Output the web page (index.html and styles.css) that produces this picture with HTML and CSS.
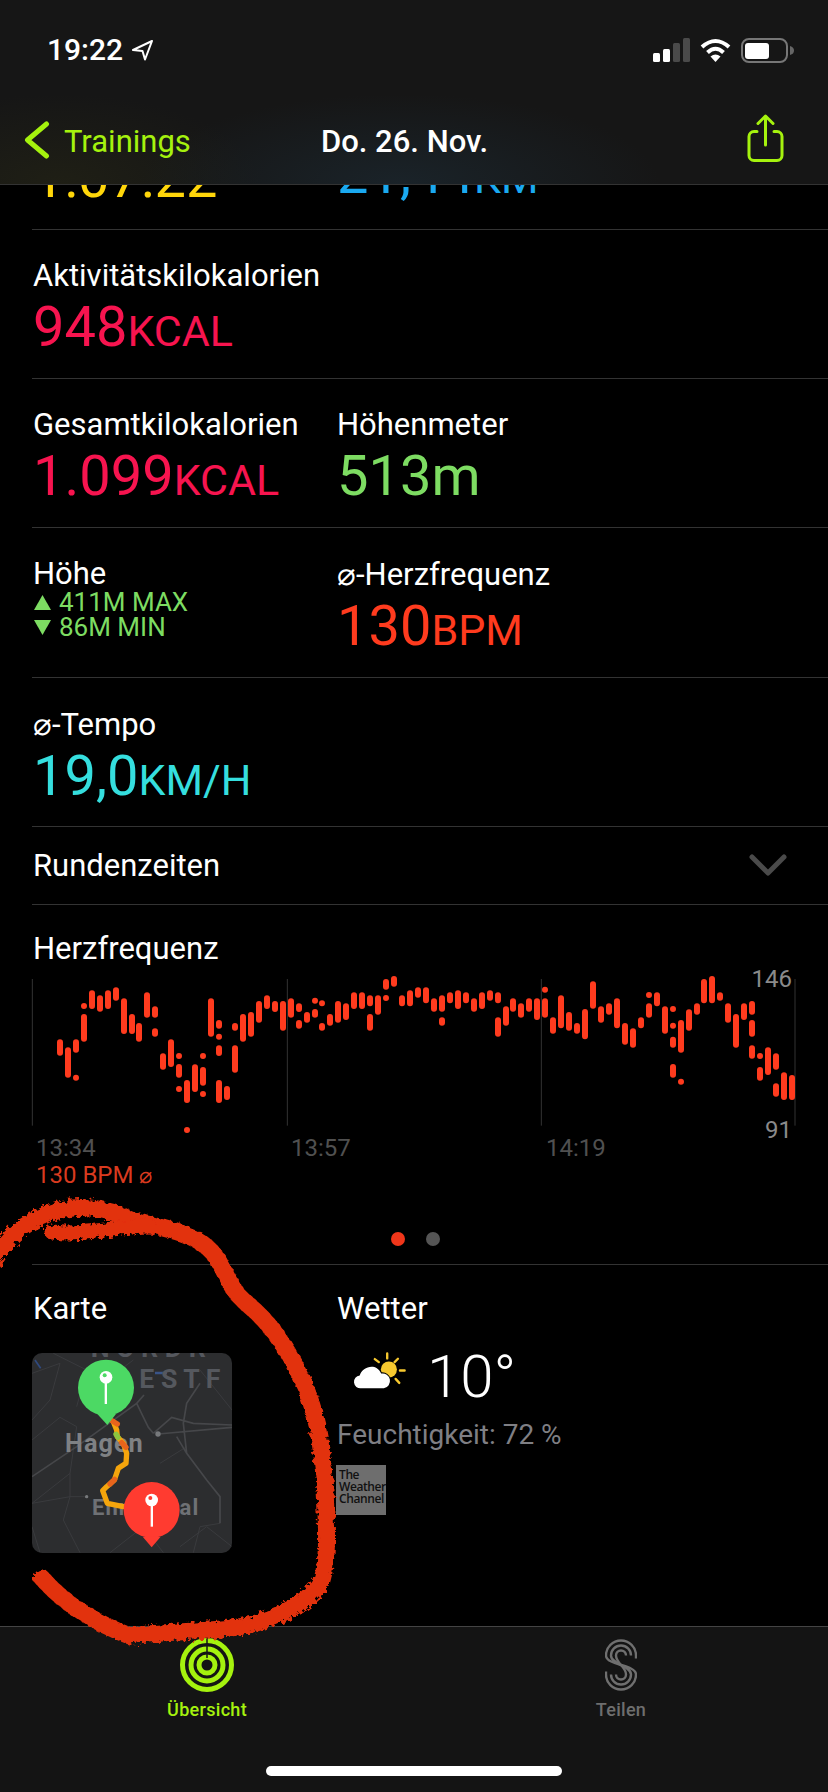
FILE: index.html
```html
<!DOCTYPE html>
<html lang="de">
<head>
<meta charset="utf-8">
<title>Do. 26. Nov.</title>
<link rel="stylesheet" href="styles.css">
</head>
<body>
<div class="phone">
  <header class="header">
    <div class="status">
      <div class="status-left">
        <span class="time">19:22</span>
        <svg class="loc" width="23" height="22" viewBox="0 0 23 22"><path d="M21 2 2 11l9.500 1L14 20.500z" fill="none" stroke="#fff" stroke-width="2" stroke-linejoin="round"/></svg>
      </div>
      <div class="status-right">
        <svg width="37" height="24" viewBox="0 0 37 24"><rect x="0" y="15" width="7" height="9" rx="1.500" fill="#fff"/><rect x="10" y="11" width="7" height="13" rx="1.500" fill="#fff"/><rect x="20" y="5" width="7" height="19" rx="1.500" fill="#4a4a4a"/><rect x="30" y="0" width="7" height="24" rx="1.500" fill="#4a4a4a"/></svg>
        <svg width="31" height="24" viewBox="0 0 31 24"><path d="M2 9Q15.500-3 29 9M7.500 14.500Q15.500 7 23.500 14.500" fill="none" stroke="#fff" stroke-width="4"/><path d="M15.500 24 10.500 18.500Q15.500 14.500 20.500 18.500z" fill="#fff"/></svg>
        <svg width="54" height="25" viewBox="0 0 54 25"><rect x="1" y="1" width="45" height="23" rx="7" fill="none" stroke="#777" stroke-width="2"/><rect x="4" y="5" width="24" height="16" rx="3" fill="#fff"/><path d="M49 8q4 1 4 4.500t-4 4.500z" fill="#666"/></svg>
      </div>
    </div>
    <nav class="nav">
      <a class="back">
        <svg width="26" height="56" viewBox="0 0 26 56"><path d="M22.500 10 3.500 26l19 16" fill="none" stroke="#a5f20e" stroke-width="5" stroke-linecap="round" stroke-linejoin="round"/></svg>
        <span>Trainings</span>
      </a>
      <div class="title">Do. 26. Nov.</div>
      <svg class="share" width="40" height="56" viewBox="0 0 40 56"><path d="M12 17.500H9a5 5 0 0 0-5 5V41.500a5 5 0 0 0 5 5H32a5 5 0 0 0 5-5V22.500a5 5 0 0 0-5-5H29M20.500 31V2M13 9.500 20.500 2 28 9.500" fill="none" stroke="#a5f20e" stroke-width="3" stroke-linecap="round" stroke-linejoin="round"/></svg>
    </nav>
  </header>

  <main class="content">
    <section class="row row-clipped">
      <div class="value yellow">1:07:22</div>
      <div class="value blue">21,44<span class="unit">KM</span></div>
    </section>
    <section class="row">
      <div><div class="label">Aktivitätskilokalorien</div><div class="value pink">948<span class="unit">KCAL</span></div></div>
    </section>
    <section class="row">
      <div><div class="label">Gesamtkilokalorien</div><div class="value pink">1.099<span class="unit">KCAL</span></div></div>
      <div><div class="label">Höhenmeter</div><div class="value green">513m</div></div>
    </section>
    <section class="row row-tall">
      <div>
        <div class="label">Höhe</div>
        <div class="alt"><svg class="tri" width="17" height="15" viewBox="0 0 17 15"><path d="M8.500 0 17 15H0z" fill="#7ddc62"/></svg>411M MAX</div>
        <div class="alt"><svg class="tri" width="17" height="15" viewBox="0 0 17 15"><path d="M8.500 15 17 0H0z" fill="#7ddc62"/></svg>86M MIN</div>
      </div>
      <div><div class="label"><span class="avg">⌀</span>-Herzfrequenz</div><div class="value hr">130<span class="unit">BPM</span></div></div>
    </section>
    <section class="row">
      <div><div class="label"><span class="avg">⌀</span>-Tempo</div><div class="value cyan">19,0<span class="unit">KM/H</span></div></div>
    </section>
    <section class="laps">
      <div class="label">Rundenzeiten</div>
      <svg width="40" height="26" viewBox="0 0 40 26"><path d="M4 4 20 20 36 4" fill="none" stroke="#4a4a4a" stroke-width="5" stroke-linecap="round" stroke-linejoin="round"/></svg>
    </section>
    <section class="heart">
      <div class="label">Herzfrequenz</div>
      <div class="chart">
        <svg class="chart-svg" width="828" height="160" viewBox="0 105 2484 480">
          <path d="M97 117V557M862 117V557M1624 117V557M2385 117V557" stroke="#333" stroke-width="3" fill="none"/>
          <path class="bars" d="M180 307V338M204 331V404M228 307V329M228 413v.1M252 231V296M252 198v.1M276 160V198M300 175V206M324 160V198M348 151V173M372 184V273M396 231V273M417 258V296M441 166V224M465 208V224M465 274V281M489 349V380M513 307V372M537 381V404M537 348v.1M537 447v.1M561 429V480M561 570v.1M585 382V447M609 390V428M609 348v.1M609 462v.1M633 184V281M657 249V257M657 325V339M657 429V480M657 290v.1M681 447V471M705 325V389M705 258V263M729 231V296M753 225V281M777 192V239M801 175V198M825 192V207M849 192V263M873 184V224M897 199V207M897 249V257M921 225V239M945 216V224M945 182v.1M966 258V263M966 190v.1M990 231V248M1014 192V239M1038 199V231M1062 166V198M1086 166V198M1110 175V190M1110 231V263M1134 175V215M1158 126V140M1158 174v.1M1182 117V131M1206 175V190M1230 160V190M1254 151V164M1278 151V181M1302 184V206M1326 175V206M1326 241V248M1350 166V181M1374 160V198M1398 166V181M1422 184V206M1446 166V198M1470 160V173M1494 166V181M1494 241V281M1518 208V248M1539 184V206M1563 199V224M1587 184V206M1611 184V231M1635 184V224M1635 149v.1M1659 241V272M1683 175V256M1707 225V263M1731 258V272M1755 216V289M1779 133V197M1803 208V239M1827 199V215M1851 184V256M1875 258V305M1899 274V314M1923 241V256M1947 199V224M1947 165v.1M1971 166V190M1995 208V272M2019 207v.1M2019 257v.1M2019 299V314M2019 381V404M2043 249V329M2043 425v.1M2067 217V263M2091 199V215M2112 126V181M2136 117V181M2160 166V173M2184 199V239M2208 231V314M2232 199V231M2256 192V215M2256 249V281M2256 325V347M2280 390V413M2280 348v.1M2304 331V396M2328 349V380M2328 439V461M2352 406V471M2376 414V471"/>
        </svg>
        <span class="axis axis-max">146</span>
        <span class="axis axis-min">91</span>
      </div>
      <div class="times"><span>13:34</span><span>13:57</span><span>14:19</span></div>
      <div class="avg-bpm">130 BPM <span class="avg">⌀</span></div>
      <div class="pager"><i class="dot dot-on"></i><i class="dot"></i></div>
    </section>
    <section class="row row-last">
      <div>
        <div class="label">Karte</div>
        <svg class="map" width="200" height="200" viewBox="36 39 600 600">
          <rect x="36" y="39" width="600" height="600" fill="#2c2d2f"/>
          <g fill="none" stroke="#3a3b3e" stroke-width="3">
            <path d="M36 300 120 232 170 260 150 400 36 490M150 400 150 470 130 540 180 638M36 490 150 470 200 470M100 40 200 90 170 200M36 100 120 70 90 180 36 240M36 560 60 638M270 638 370 560 430 638M480 620 560 560 636 620M520 638 540 560 600 550 600 470M420 370 500 320M300 90 340 60M540 90 636 210"/>
          </g>
          <g fill="none" stroke="#46474a" stroke-width="5">
            <path d="M36 410 170 320 250 262 350 190 372 165M350 190 385 262 400 280M400 280 455 232 520 250 636 255M415 282 636 262M470 290 500 340 560 420 600 470 600 550M540 130 500 190 490 250 500 340"/>
          </g>
          <path d="M45 60 62 85" stroke="#2f4a80" stroke-width="5" fill="none"/>
          <path d="M405 99H440" stroke="#3a5488" stroke-width="7" fill="none"/>
          <circle cx="414" cy="282" r="8" fill="#77797c"/>
          <circle cx="200" cy="470" r="5" fill="#77797c"/>
          <text class="map-region" x="212" y="50">N O R D R</text>
          <text class="map-region" x="358" y="145">E S T F</text>
          <text class="map-city" x="135" y="335">Hagen</text>
          <text class="map-town" x="216" y="525">Ennepetal</text>
          <path d="M280 245 290 270 292 290 310 310 320 340 318 370 295 385 283 420 260 440 248 452 262 490 310 500" fill="none" stroke="#f5a50c" stroke-width="16" stroke-linecap="round" stroke-linejoin="round"/>
          <path d="M276 242 292 252M305 308 318 322M270 432 284 418" fill="none" stroke="#e8641c" stroke-width="16" stroke-linecap="round"/>
          <path d="M288 283 294 292" fill="none" stroke="#8cc63f" stroke-width="16" stroke-linecap="round"/>
          <circle cx="258" cy="143" r="84" fill="#4cd964"/><path d="M232 222 262 255 288 222z" fill="#4cd964"/>
          <circle cx="258" cy="112" r="19" fill="#fff"/><circle cx="254" cy="106" r="6" fill="#4cd964"/><rect x="254" y="125" width="7" height="67" fill="#fff"/>
          <circle cx="395" cy="510" r="84" fill="#ff3b30"/><path d="M368 590 395 622 422 590z" fill="#ff3b30"/>
          <circle cx="395" cy="480" r="19" fill="#fff"/><circle cx="391" cy="474" r="6" fill="#ff3b30"/><rect x="392" y="493" width="7" height="67" fill="#fff"/>
        </svg>
      </div>
      <div>
        <div class="label">Wetter</div>
        <div class="weather">
          <svg class="weather-icon" width="57" height="42" viewBox="95 210 170 125">
            <circle cx="205" cy="268" r="24" fill="#f7c92f"/>
            <path d="M200 220V235M232 236 222 246M238 271H252M225 296 236 308M163 237 175 246" stroke="#f7c92f" stroke-width="7" stroke-linecap="round"/>
            <path d="M122 324a19 19 0 0 1-4-38C125 262 165 245 182 280A21 21 0 0 1 190 324z" fill="#fff" stroke="#000" stroke-width="6" paint-order="stroke"/>
          </svg>
          <span class="temp">10°</span>
        </div>
        <div class="humidity">Feuchtigkeit: 72 %</div>
        <div class="twc">The<br>Weather<br>Channel</div>
      </div>
    </section>
  </main>

  <footer class="tabs">
    <div class="tab tab-on">
      <svg width="56" height="54" viewBox="0 0 56 54">
        <g fill="none" stroke="#a5f20e" stroke-width="5"><circle cx="28" cy="27" r="24.500"/><circle cx="28" cy="27" r="16"/><circle cx="28" cy="27" r="8"/></g>
        <path d="M28 0V20" stroke="#141414" stroke-width="1.500"/>
      </svg>
      <span>Übersicht</span>
    </div>
    <div class="tab">
      <svg width="32" height="54" viewBox="0 -1.500 32 54"><g fill="none" stroke="#6f6f6f" stroke-width="2.400"><path d="M31 19V16A15 15 0 0 0 1 16C1 26 31 25 31 35A15 15 0 0 1 1 35V32"/><path d="M26 16A10 10 0 0 0 6 16C6 25 26 26 26 35A10 10 0 0 1 6 35"/><path d="M21 16A5 5 0 0 0 11 16C11 24 21 27 21 35A5 5 0 0 1 11 35"/></g></svg>
      <span>Teilen</span>
    </div>
  </footer>
  <div class="homebar-wrap"><div class="homebar"></div></div>

  <svg class="scribble" width="828" height="1792" viewBox="0 0 828 1792">
    <defs>
      <filter id="rough" x="-5%" y="-5%" width="110%" height="110%">
        <feTurbulence type="fractalNoise" baseFrequency="0.22" numOctaves="3" seed="4"/>
        <feDisplacementMap in="SourceGraphic" scale="9"/>
      </filter>
    </defs>
    <g filter="url(#rough)" fill="none" stroke="#e2300e" stroke-linecap="round" stroke-linejoin="round">
      <path stroke-width="17" d="M-8 1262C5 1240 20 1225 48 1214 75 1203 105 1207 132 1220 160 1228 190 1232 207 1247 225 1262 225 1285 245 1302 270 1322 285 1345 300 1375 315 1405 322 1440 325 1490 327 1530 328 1560 322 1580 312 1598 290 1612 260 1622 225 1633 170 1630 130 1636 100 1625 65 1605 42 1578"/>
      <path stroke-width="15" d="M52 1232C85 1236 115 1226 150 1226"/>
    </g>
  </svg>
</div>
</body>
</html>
```
FILE: styles.css
```css
* { box-sizing: border-box; }
html, body { margin: 0; padding: 0; background: #000; }
body { font-family: Roboto, "Liberation Sans", sans-serif; color: #fff; }
.phone { position: relative; width: 828px; height: 1792px; display: flex; flex-direction: column; overflow: hidden; background: #000; }

.header { height: 185px; padding-top: 32px; border-bottom: 1px solid #333;
  background: radial-gradient(260px 90px at 400px 184px, #1a2329 0%, rgba(26,35,41,0) 100%), radial-gradient(200px 90px at 60px 184px, #1f1f15 0%, rgba(31,31,21,0) 100%), #161616; }
.status { height: 36px; display: flex; justify-content: space-between; align-items: center; padding: 0 33px 0 47px; }
.status-left { display: flex; align-items: center; gap: 8px; }
.time { font-size: 30px; font-weight: 500; line-height: 36px; }
.status-right { display: flex; align-items: center; gap: 10px; }
.nav { height: 56px; margin-top: 46px; display: grid; grid-template-columns: 1fr auto 1fr; align-items: center; padding: 0 43px 0 24px; }
.back { display: flex; align-items: center; gap: 14px; color: #a5f20e; font-size: 31px; line-height: 36px; }
.title { font-size: 31px; font-weight: 500; line-height: 36px; }
.share { justify-self: end; }

.content { flex: 1; overflow: hidden; }
.row { margin-left: 32px; padding: 28px 0 21px 1px; height: 149px; border-bottom: 1px solid #333; display: grid; grid-template-columns: 304px 1fr; }
.row-clipped { height: 45px; padding-top: 0; align-items: end; align-content: end; overflow: hidden; }
.row-tall { height: 150px; }
.label { font-size: 31px; line-height: 36px; white-space: nowrap; }
.value { font-size: 56px; line-height: 60px; margin-top: 3px; white-space: nowrap; }
.unit { font-size: 43px; }
.yellow { color: #ffd60a; }
.blue { color: #1aa9f0; }
.pink { color: #f7144f; }
.green { color: #7ddc62; }
.hr { color: #ff3b1e; }
.cyan { color: #35dede; }
.avg { font-family: "DejaVu Sans", sans-serif; font-weight: 300; }
.alt { font-size: 26px; line-height: 25px; color: #7ddc62; display: flex; align-items: center; gap: 8px; position: relative; top: -2px; }
.tri { margin-left: 1px; flex: none; }

.laps { margin-left: 32px; padding-left: 1px; padding-right: 40px; height: 78px; border-bottom: 1px solid #333; display: flex; align-items: center; justify-content: space-between; }

.heart { margin-left: 32px; padding: 26px 0 18px 1px; height: 360px; border-bottom: 1px solid #333; }
.chart { position: relative; margin: 8px 0 0 -33px; width: 828px; height: 160px; }
.chart-svg { display: block; }
.bars { fill: none; stroke: #ff3b1e; stroke-width: 18; stroke-linecap: round; }
.axis { position: absolute; right: 36px; font-size: 24px; line-height: 28px; color: #8a8a8a; }
.axis-max { top: -10px; }
.axis-min { top: 141px; }
.times { display: grid; grid-template-columns: 255px 255px 1fr; padding-left: 3px; font-size: 24px; line-height: 27px; color: #505050; }
.avg-bpm { padding-left: 3px; font-size: 24px; line-height: 27px; color: #d93a1f; }
.avg-bpm .avg { font-size: 22px; }
.pager { margin: 43px 0 0 -33px; padding-left: 3px; display: flex; justify-content: center; gap: 21px; }
.dot { width: 14px; height: 14px; border-radius: 50%; background: #555; }
.dot-on { background: #f0361a; }

.row-last { height: auto; flex: 1; padding-top: 26px; border-bottom: 0; height: 361px; }
.map { display: block; margin: 26px 0 0 -1px; border-radius: 10px; }
.map-region { font-size: 80px; font-weight: 700; fill: #55585e; font-family: Roboto, sans-serif; }
.map-city { font-size: 76px; font-weight: 700; fill: #7f8184; letter-spacing: 3px; font-family: Roboto, sans-serif; }
.map-town { font-size: 66px; font-weight: 700; fill: #6f7175; letter-spacing: 3px; font-family: Roboto, sans-serif; }
.weather { display: flex; align-items: flex-start; gap: 18px; margin: 20px 0 0 15px; height: 60px; }
.weather-icon { margin-top: 3px; }
.temp { font-size: 60px; line-height: 60px; font-weight: 300; }
.humidity { margin-top: 12px; font-size: 28px; line-height: 32px; color: #7f7f84; white-space: nowrap; }
.twc { margin: 14px 0 0 -1px; width: 50px; height: 50px; padding: 4px 0 0 3px; background: #6e6e6e; color: #111; font-family: "Open Sans", sans-serif; font-weight: 600; font-size: 12px; line-height: 12px; letter-spacing: -0.4px; white-space: nowrap; }

.tabs { height: 95px; background: #141414; border-top: 1px solid #444; padding-top: 11px; display: grid; grid-template-columns: 1fr 1fr; }
.tab { display: flex; flex-direction: column; align-items: center; color: #6e6e6e; font-size: 18px; font-weight: 500; line-height: 22px; letter-spacing: 0.3px; gap: 7px; }
.tab-on { color: #a5f20e; }
.homebar-wrap { height: 71px; background: #141414; padding-top: 45px; display: flex; justify-content: center; }
.homebar { width: 296px; height: 10px; border-radius: 5px; background: #fff; }

.scribble { position: absolute; left: 0; top: 0; pointer-events: none; }
```
